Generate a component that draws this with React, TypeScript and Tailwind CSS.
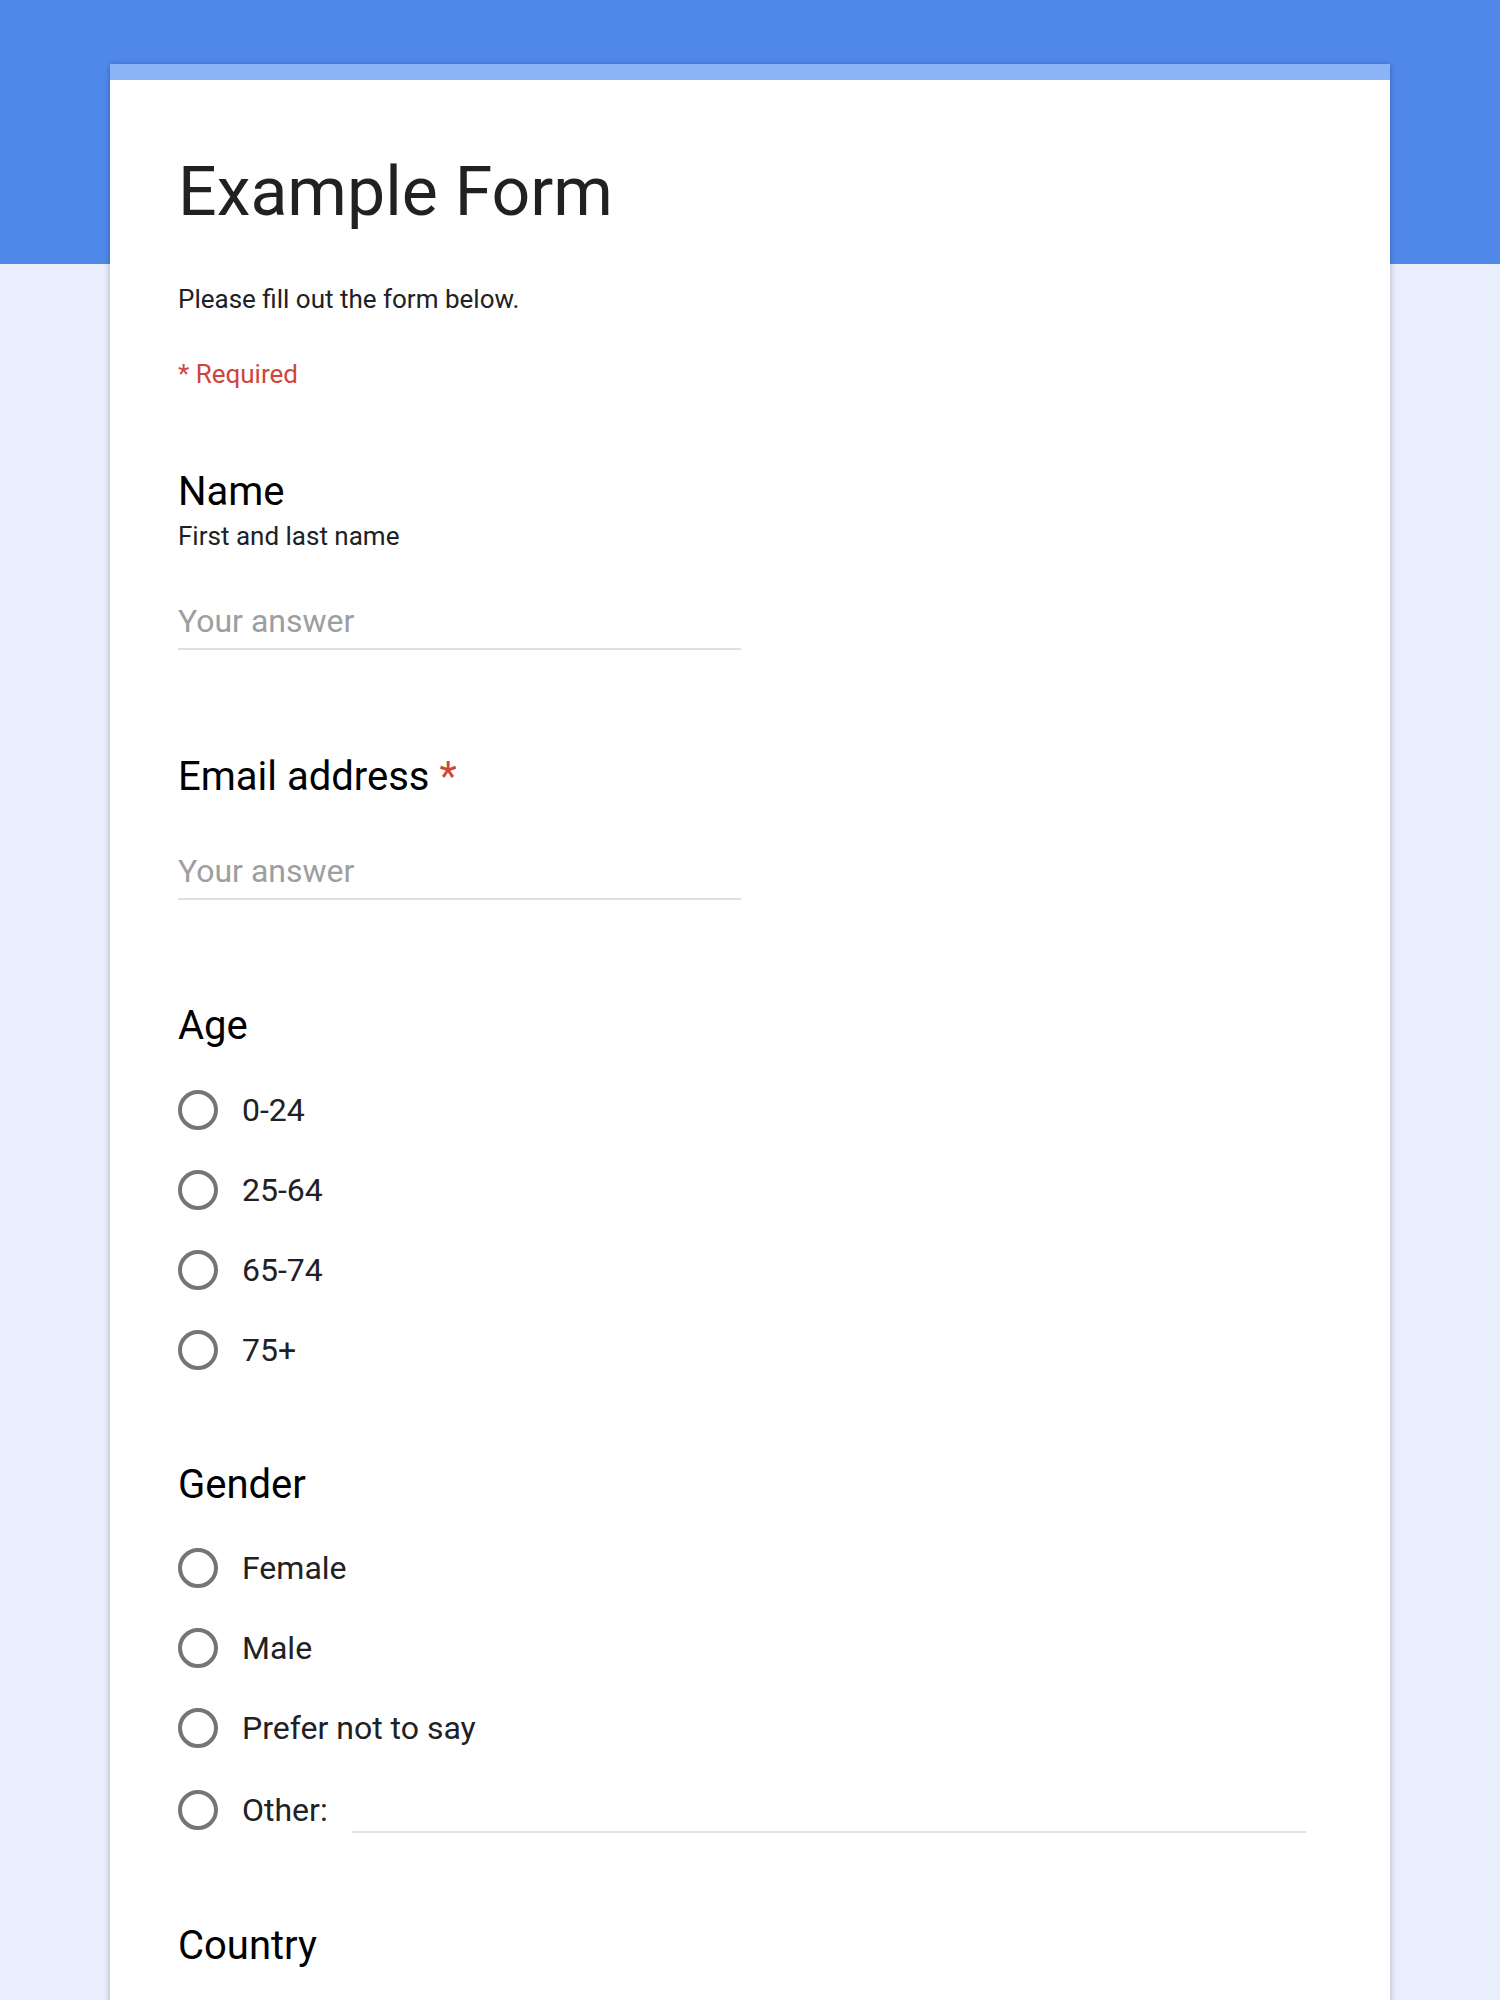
import React from 'react';

const FONT = "font-['Roboto','Liberation_Sans',sans-serif]";

const RadioRow: React.FC<{ label: string; other?: boolean }> = ({ label, other }) => (
  <div className={`flex items-center h-[40px] ${other ? 'mt-[2px]' : ''}`}>
    <span className="w-[40px] h-[40px] rounded-full border-[4px] border-[#757575] shrink-0" />
    <span className="ml-[24px] text-[32px] leading-[40px] text-[#202124]">{label}</span>
    {other && (
      <div className="self-start flex-1 ml-[24px] mr-[16px] h-[43px] border-b-2 border-[#e0e0e0]" />
    )}
  </div>
);

const TextAnswer: React.FC<{ className: string }> = ({ className }) => (
  <div className={`w-[563px] pb-[5px] border-b-2 border-[#e0e0e0] ${className}`}>
    <span className="block text-[32px] leading-[44px] text-[#9e9e9e]">Your answer</span>
  </div>
);

const QuestionTitle: React.FC<{ children: React.ReactNode; required?: boolean }> = ({ children, required }) => (
  <h2 className="text-[40px] leading-[48px] text-black font-normal">
    {children}
    {required && <span className="text-[#d0453a]"> *</span>}
  </h2>
);

export default function App() {
  const ages = ['0-24', '25-64', '65-74', '75+'];
  const genders = ['Female', 'Male', 'Prefer not to say'];

  return (
    <div
      className={`min-h-[2000px] w-full bg-[linear-gradient(to_bottom,#5088ea_264px,#e8eefc_264px)] pt-[64px] pb-[80px] ${FONT}`}
    >
      <div className="mx-auto w-[1280px] bg-white shadow-[0_1px_6px_rgba(0,0,0,0.28)]">
        {/* theme strip */}
        <div className="h-[16px] bg-[#8ab4f7]" />

        <div className="px-[68px] pt-[70px] pb-[160px]">
          {/* Header */}
          <h1 className="text-[68px] leading-[84px] text-[#212121] font-normal">Example Form</h1>
          <p className="mt-[45px] text-[26px] leading-[40px] text-[#202124]">Please fill out the form below.</p>
          <p className="mt-[35px] text-[26px] leading-[40px] text-[#d0453a]">* Required</p>

          {/* Name */}
          <div className="mt-[74px]">
            <QuestionTitle>Name</QuestionTitle>
            <p className="text-[26px] leading-[40px] text-[#202124]">First and last name</p>
            <TextAnswer className="mt-[43px]" />
          </div>

          {/* Email */}
          <div className="mt-[103px]">
            <QuestionTitle required>Email address</QuestionTitle>
            <TextAnswer className="mt-[48px]" />
          </div>

          {/* Age */}
          <div className="mt-[102px]">
            <QuestionTitle>Age</QuestionTitle>
            <div className="mt-[40px] flex flex-col gap-[40px]">
              {ages.map((a) => (
                <RadioRow key={a} label={a} />
              ))}
            </div>
          </div>

          {/* Gender */}
          <div className="mt-[91px]">
            <QuestionTitle>Gender</QuestionTitle>
            <div className="mt-[39px] flex flex-col gap-[40px]">
              {genders.map((g) => (
                <RadioRow key={g} label={g} />
              ))}
              <RadioRow label="Other:" other />
            </div>
          </div>

          {/* Country */}
          <div className="mt-[92px]">
            <QuestionTitle>Country</QuestionTitle>
          </div>
        </div>
      </div>
    </div>
  );
}
